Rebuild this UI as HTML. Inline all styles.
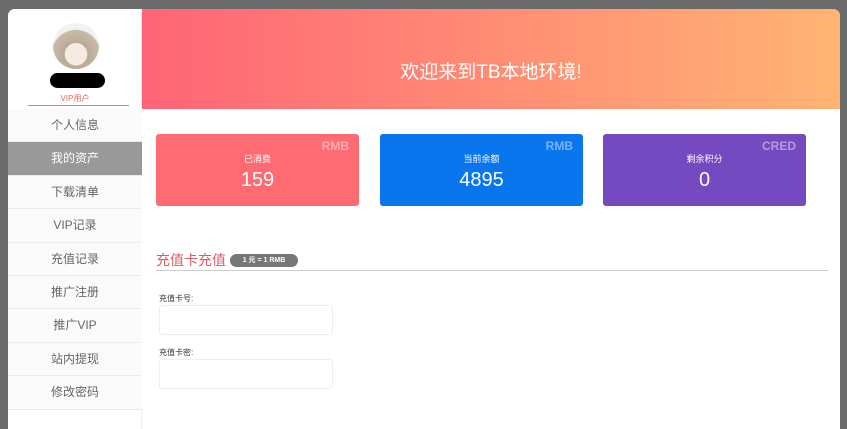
<!DOCTYPE html><html><head><meta charset="utf-8"><style>
*{margin:0;padding:0;box-sizing:border-box}
body{width:847px;height:420px;background:#6b6b6b;font-family:"Liberation Sans","Noto Sans CJK SC",sans-serif;overflow:hidden;position:relative}
.win{position:absolute;left:8px;top:9px;width:832px;height:420px;background:#fff;border-radius:7px 7px 0 0;overflow:hidden}
.side{position:absolute;left:0;top:0;width:134px;height:420px;background:#fff;border-right:1px solid #eee}
.banner{position:absolute;left:134px;top:0;width:698px;height:100px;background:linear-gradient(90deg,#ff6476,#ffb473);color:#fff;font-size:19px;text-align:center;line-height:128px}
.av{position:absolute;left:45px;top:14px;width:46px;height:46px;border-radius:50%;background:radial-gradient(circle at 50% 68%,#f6ebe3 28%,#b9aa98 30%,#cbbba8 62%,#f2f2f2 64%)}
.blk{position:absolute;left:42px;top:64px;width:55px;height:15px;background:#000;border-radius:8px}
.vip{position:absolute;left:0;width:134px;top:84px;text-align:center;font-size:8px;color:#e06a4a}
.line{position:absolute;left:20px;top:96px;width:101px;border-top:1px solid #999}
.menu{position:absolute;left:0;top:100px;width:134px}
.menu div{height:33.4px;line-height:33px;text-align:center;font-size:12px;color:#666;background:#fafafa;border-bottom:1px solid #ececec}
.menu div.on{background:#999;color:#fff}
.card{position:absolute;top:125px;width:203px;height:72px;border-radius:3px;color:#fff;text-align:center}
.card .u{position:absolute;right:10px;top:5px;font-weight:bold;font-size:12px;opacity:.45}
.card .t{position:absolute;top:18px;width:100%;font-size:9px}
.card .n{position:absolute;top:35px;width:100%;font-size:20px}
.h{position:absolute;left:148px;top:241px;font-size:14px;color:#e05a66}
.badge{position:absolute;left:222px;top:245px;width:68px;height:13px;border-radius:7px;background:#777;color:#fff;font-size:7px;font-weight:bold;text-align:center;line-height:13px}
.hr{position:absolute;left:148px;top:261px;width:672px;border-top:1px solid #ccc}
.lb{position:absolute;left:151px;font-size:8px;color:#333}
.in{position:absolute;left:151px;width:174px;height:30px;border:1px solid #eee;border-radius:3px}
</style></head><body><div class="win">
<div class="side"><div class="av"></div><div class="blk"></div><div class="vip">VIP用户</div><div class="line"></div>
<div class="menu"><div>个人信息</div><div class="on">我的资产</div><div>下载清单</div><div>VIP记录</div><div>充值记录</div><div>推广注册</div><div>推广VIP</div><div>站内提现</div><div>修改密码</div></div></div>
<div class="banner">欢迎来到TB本地环境!</div>
<div class="card" style="left:148px;background:#ff6b72"><span class="u">RMB</span><div class="t">已消费</div><div class="n">159</div></div>
<div class="card" style="left:372px;background:#0a76ee"><span class="u">RMB</span><div class="t">当前余额</div><div class="n">4895</div></div>
<div class="card" style="left:595px;background:#7549c0"><span class="u">CRED</span><div class="t">剩余积分</div><div class="n">0</div></div>
<div class="h">充值卡充值</div><div class="badge">1 元 = 1 RMB</div><div class="hr"></div>
<div class="lb" style="top:284px">充值卡号:</div><div class="in" style="top:296px"></div>
<div class="lb" style="top:338px">充值卡密:</div><div class="in" style="top:350px"></div>
</div></body></html>
